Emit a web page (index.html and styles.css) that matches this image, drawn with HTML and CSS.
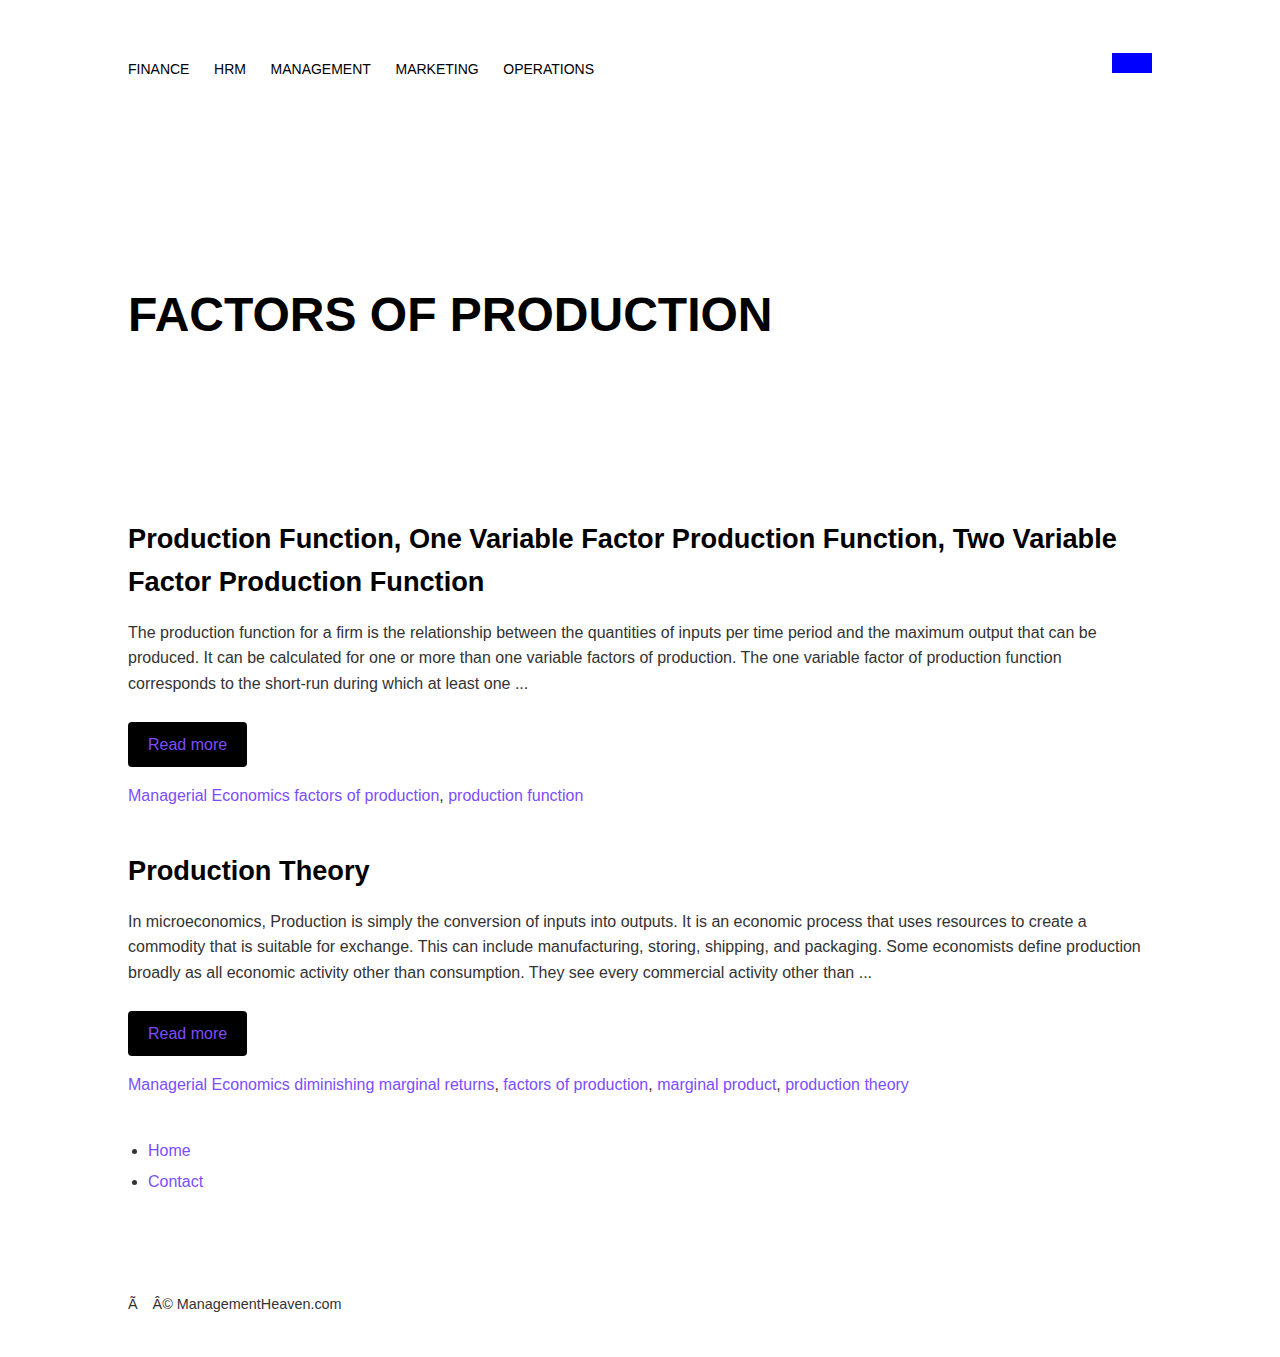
FILE: index.html
```html
<!DOCTYPE html>
<html lang="en">
<head>
<meta charset="utf-8">
<title>Factors of Production</title>
<link rel="stylesheet" href="styles.css">
</head>
<body>
<div class="wrap">
  <header class="site-header">
    <nav class="main-nav">
      <a href="#">FINANCE</a>
      <a href="#">HRM</a>
      <a href="#">MANAGEMENT</a>
      <a href="#">MARKETING</a>
      <a href="#">OPERATIONS</a>
    </nav>
    <button class="menu-toggle" aria-label="Menu"></button>
  </header>

  <section class="hero">
    <h1>FACTORS OF PRODUCTION</h1>
  </section>

  <main class="posts">
    <article class="post">
      <h2>Production Function, One Variable Factor Production Function, Two Variable Factor Production Function</h2>
      <p>The production function for a firm is the relationship between the quantities of inputs per time period and the maximum output that can be produced. It can be calculated for one or more than one variable factors of production. The one variable factor of production function corresponds to the short-run during which at least one ...</p>
      <a class="btn" href="#">Read more</a>
      <div class="meta"><a href="#">Managerial Economics</a> <a href="#">factors of production</a>, <a href="#">production function</a></div>
    </article>

    <article class="post">
      <h2>Production Theory</h2>
      <p>In microeconomics, Production is simply the conversion of inputs into outputs. It is an economic process that uses resources to create a commodity that is suitable for exchange. This can include manufacturing, storing, shipping, and packaging. Some economists define production broadly as all economic activity other than consumption. They see every commercial activity other than ...</p>
      <a class="btn" href="#">Read more</a>
      <div class="meta"><a href="#">Managerial Economics</a> <a href="#">diminishing marginal returns</a>, <a href="#">factors of production</a>, <a href="#">marginal product</a>, <a href="#">production theory</a></div>
    </article>
  </main>

  <footer class="site-footer">
    <ul class="footer-links">
      <li><a href="#">Home</a></li>
      <li><a href="#">Contact</a></li>
    </ul>
    <p class="copy">Ã<span class="gap"></span>Â© ManagementHeaven.com</p>
  </footer>
</div>
</body>
</html>
```

FILE: styles.css
```css
* { box-sizing: border-box; }

body {
  margin: 0;
  font-family: "Liberation Sans", Arial, sans-serif;
  color: #333;
  background: #fff;
  font-size: 16px;
  line-height: 1.6;
}

a { color: #7c4dff; text-decoration: none; }

.wrap {
  width: 1024px;
  margin: 0 auto;
}

.site-header {
  display: flex;
  justify-content: space-between;
  align-items: flex-start;
  padding-top: 53px;
}

.main-nav {
  display: flex;
  gap: 24.6px;
  margin-top: 8px;
  line-height: normal;
}

.main-nav a {
  color: #000;
  font-size: 14px;
}

.menu-toggle {
  width: 40px;
  height: 20px;
  background: #0000ff;
  border: 0;
  padding: 0;
  margin: 0;
  display: block;
}

.hero {
  padding: 209px 0 0;
}

.hero h1 {
  margin: 0;
  font-size: 48px;
  line-height: 1.2;
  font-weight: 700;
  color: #000;
}

.posts {
  margin-top: 173px;
}

.post {
  margin-bottom: 40px;
}

.post h2 {
  margin: 0 0 16px;
  font-size: 27.2px;
  line-height: 1.6;
  color: #000;
}

.post p {
  margin: 0 0 26px;
}

.btn {
  display: inline-block;
  background: #000;
  color: #7c4dff;
  padding: 10px 20px;
  border-radius: 4px;
  line-height: 25px;
}

.meta {
  margin-top: 16px;
}

.site-footer {
  margin-top: 31px;
  padding-bottom: 40px;
}

.footer-links {
  margin: 0;
  padding-left: 20px;
}

.footer-links li {
  margin-bottom: 5.4px;
}

.copy {
  margin: 99px 0 0;
  font-size: 14.4px;
  line-height: 1.6;
}

.gap {
  display: inline-block;
  width: 15px;
}
```
